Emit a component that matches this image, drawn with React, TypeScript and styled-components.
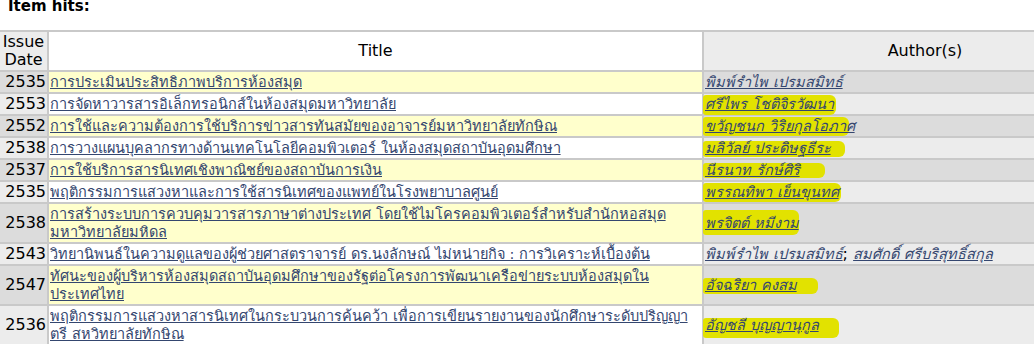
import React from "react";
import styled, { createGlobalStyle } from "styled-components";

const Global = createGlobalStyle`
  html, body { margin: 0; padding: 0; background: #fff; overflow: hidden; }
  body { font-family: "DejaVu Sans", Tahoma, sans-serif; font-size: 16px; color: #000; }
`;

const Page = styled.div`
  width: 1034px;
  height: 344px;
  overflow: hidden;
`;

const Heading = styled.h2`
  margin: -3px 0 0 8px;
  height: 18px;
  font-family: "DejaVu Sans", sans-serif;
  font-weight: bold;
  font-size: 15px;
  line-height: 18px;
`;

const Table = styled.table`
  border-collapse: separate;
  border-spacing: 2px;
  background: #c9c9c9;
  margin-left: -2px;
  margin-top: 15px;
  width: 1150px;
  table-layout: fixed;
`;

const Th = styled.th<{ $tone: "white" | "gray"; $w?: number }>`
  font-weight: normal;
  background: ${(p) => (p.$tone === "white" ? "#ffffff" : "#ececec")};
  padding: 1px 1px;
  line-height: 18px;
  text-align: center;
  vertical-align: middle;
  width: ${(p) => (p.$w ? `${p.$w}px` : "auto")};
`;

const Td = styled.td<{ $bg: string; $align?: string }>`
  background: ${(p) => p.$bg};
  padding: 1px 1px;
  line-height: 18px;
  height: 18px;
  vertical-align: middle;
  text-align: ${(p) => p.$align ?? "left"};
  white-space: nowrap;
`;

const Link = styled.a`
  color: #34466f;
  text-decoration: underline;
  font-size: 14.5px;
`;

const AuthorLink = styled(Link)`
  font-style: italic;
`;

const Mark = styled.span<{ $right: number; $top: number; $bottom: number }>`
  position: relative;
  display: inline-block;
  &::before {
    content: "";
    position: absolute;
    left: -2px;
    right: ${(p) => p.$right}px;
    top: ${(p) => p.$top}px;
    bottom: ${(p) => p.$bottom}px;
    background: #e2e200;
    border-radius: 3px 6px 6px 3px;
    z-index: 0;
  }
  & > * {
    position: relative;
    z-index: 1;
  }
`;

type Hl = { r: number; t: number; b: number };
type Row = { date: string; title: string[]; authors: string[]; hl?: Hl };

const rows: Row[] = [
  { date: "2535", title: ["การประเมินประสิทธิภาพบริการห้องสมุด"], authors: ["พิมพ์รำไพ เปรมสมิทธ์"] },
  { date: "2553", title: ["การจัดหาวารสารอิเล็กทรอนิกส์ในห้องสมุดมหาวิทยาลัย"], authors: ["ศรีไพร โชติจิรวัฒนา"], hl: { r: -2, t: 0, b: -2 } },
  { date: "2552", title: ["การใช้และความต้องการใช้บริการข่าวสารทันสมัยของอาจารย์มหาวิทยาลัยทักษิณ"], authors: ["ขวัญชนก วิริยกุลโอภาศ"], hl: { r: 6, t: 0, b: -1 } },
  { date: "2538", title: ["การวางแผนบุคลากรทางด้านเทคโนโลยีคอมพิวเตอร์ ในห้องสมุดสถาบันอุดมศึกษา"], authors: ["มลิวัลย์ ประดิษฐธีระ"], hl: { r: -14, t: 2, b: 0 } },
  { date: "2537", title: ["การใช้บริการสารนิเทศเชิงพาณิชย์ของสถาบันการเงิน"], authors: ["นีรนาท รักษ์ศิริ"], hl: { r: -25, t: 2, b: 1 } },
  { date: "2535", title: ["พฤติกรรมการแสวงหาและการใช้สารนิเทศของแพทย์ในโรงพยาบาลศูนย์"], authors: ["พรรณทิพา เย็นขุนทศ"], hl: { r: -2, t: 0, b: -1 } },
  { date: "2538", title: ["การสร้างระบบการควบคุมวารสารภาษาต่างประเทศ โดยใช้ไมโครคอมพิวเตอร์สำหรับสำนักหอสมุด", "มหาวิทยาลัยมหิดล"], authors: ["พรจิตต์ หมีงาม"], hl: { r: 0, t: -4, b: -3 } },
  { date: "2543", title: ["วิทยานิพนธ์ในความดูแลของผู้ช่วยศาสตราจารย์ ดร.นงลักษณ์ ไม่หน่ายกิจ : การวิเคราะห์เบื้องต้น"], authors: ["พิมพ์รำไพ เปรมสมิทธ์", "สมศักดิ์ ศรีบริสุทธิ์สกุล"] },
  { date: "2547", title: ["ทัศนะของผู้บริหารห้องสมุดสถาบันอุดมศึกษาของรัฐต่อโครงการพัฒนาเครือข่ายระบบห้องสมุดใน", "ประเทศไทย"], authors: ["อัจฉริยา คงสม"], hl: { r: -21, t: 2, b: 0 } },
  { date: "2536", title: ["พฤติกรรมการแสวงหาสารนิเทศในกระบวนการค้นคว้า เพื่อการเขียนรายงานของนักศึกษาระดับปริญญา", "ตรี สหวิทยาลัยทักษิณ"], authors: ["อัญชลี บุญญานุกูล"], hl: { r: -20, t: 2, b: -4 } },
];

const Authors: React.FC<{ row: Row }> = ({ row }) => {
  const links = row.authors.map((a, i) => (
    <React.Fragment key={a}>
      {i > 0 && "; "}
      <AuthorLink href="#">{a}</AuthorLink>
    </React.Fragment>
  ));
  if (!row.hl) return <>{links}</>;
  return (
    <Mark $right={row.hl.r} $top={row.hl.t} $bottom={row.hl.b}>
      <span>{links}</span>
    </Mark>
  );
};

export default function App() {
  return (
    <Page>
      <Global />
      <Heading>Item hits:</Heading>
      <Table>
        <thead>
          <tr>
            <Th $tone="gray" $w={45}>Issue<br />Date</Th>
            <Th $tone="white" $w={651}>Title</Th>
            <Th $tone="gray">Author(s)</Th>
          </tr>
        </thead>
        <tbody>
          {rows.map((r, i) => {
            const odd = i % 2 === 0;
            const side = odd ? "#dcdcdc" : "#ececec";
            const mid = odd ? "#ffffcc" : "#ffffff";
            return (
              <tr key={i}>
                <Td $bg={side} $align="right">{r.date}</Td>
                <Td $bg={mid}>
                  <Link href="#">
                    {r.title.map((l, j) => (
                      <React.Fragment key={j}>
                        {j > 0 && <br />}
                        {l}
                      </React.Fragment>
                    ))}
                  </Link>
                </Td>
                <Td $bg={side}><Authors row={r} /></Td>
              </tr>
            );
          })}
        </tbody>
      </Table>
    </Page>
  );
}
